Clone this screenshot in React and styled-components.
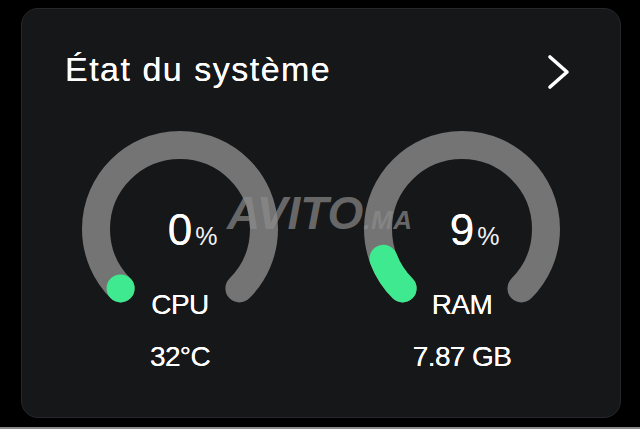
import React from "react";
import styled, { createGlobalStyle } from "styled-components";

const Global = createGlobalStyle`
  html, body { margin: 0; padding: 0; background: #000; }
  body { width: 640px; height: 429px; overflow: hidden; font-family: "Liberation Sans", Arial, sans-serif; }
  #root { width: 640px; height: 429px; }
`;

const Page = styled.div`
  width: 640px;
  height: 429px;
  background: #000;
  padding: 8px 19px 0 21px;
  box-sizing: border-box;
  display: flex;
  flex-direction: column;
`;

const Card = styled.section`
  position: relative;
  box-sizing: border-box;
  width: 600px;
  height: 410px;
  background: #161719;
  border: 1px solid #26272a;
  border-radius: 17px;
  padding: 40px 48px 0 43px;
  color: #fff;
  display: flex;
  flex-direction: column;
`;

const Header = styled.header`
  display: flex;
  align-items: center;
  justify-content: space-between;
  height: 40px;
`;

const Title = styled.h2`
  margin: 0;
  font-weight: 400;
  font-size: 34px;
  line-height: 40px;
  letter-spacing: 1.5px;
  color: #fff;
  text-shadow: 0 0 0.6px #fff;
`;

const Chevron = styled.svg`
  margin-top: 5px;
  display: block;
`;

const Gauges = styled.div`
  display: grid;
  grid-template-columns: 200px 200px;
  column-gap: 82px;
  justify-content: center;
  margin: 40px -48px 0 -43px;
`;

const GaugeCol = styled.div`
  display: flex;
  flex-direction: column;
  align-items: center;
`;

const Dial = styled.div`
  display: grid;
  width: 200px;
  height: 200px;
  & > * { grid-area: 1 / 1; }
`;

const Readout = styled.div`
  align-self: center;
  display: grid;
  grid-template-columns: 1fr auto 1fr;
  align-items: baseline;
  width: 100%;
  margin-top: 1px;
`;

const Num = styled.span`
  grid-column: 2;
  font-size: 44px;
  line-height: 44px;
  color: #fff;
  text-shadow: 0 0 0.6px #fff;
`;

const Pct = styled.span`
  grid-column: 3;
  justify-self: start;
  margin-left: 3px;
  font-size: 25px;
  color: #f2f2f2;
`;

const Label = styled.div`
  margin-top: -38px;
  font-size: 28px;
  line-height: 28px;
  letter-spacing: -0.5px;
  color: #fff;
  text-shadow: 0 0 0.6px #fff;
`;

const Sub = styled.div`
  margin-top: 24px;
  font-size: 28px;
  line-height: 28px;
  letter-spacing: -0.6px;
  color: #fff;
  text-shadow: 0 0 0.6px #fff;
`;

const Watermark = styled.div`
  position: absolute;
  left: 205px;
  top: 181px;
  font-family: "Liberation Sans", Arial, sans-serif;
  font-weight: 700;
  font-style: italic;
  color: rgba(140, 140, 140, 0.7);
  white-space: nowrap;
  pointer-events: none;
  line-height: 1;
`;

const WmBig = styled.span`
  font-size: 46px;
  letter-spacing: 0px;
`;

const WmSmall = styled.span`
  font-size: 26px;
  letter-spacing: 0.5px;
`;

const Rule = styled.div`
  margin-top: 9px;
  height: 2px;
  margin-left: -21px;
  margin-right: -19px;
  background: #8a8a8a;
`;

const R = 84;
const C = 100;
const pt = (deg) => {
  const a = (deg * Math.PI) / 180;
  return [C + R * Math.cos(a), C + R * Math.sin(a)];
};
const [sx, sy] = pt(135);
const [ex, ey] = pt(45);
const ARC = `M ${sx} ${sy} A ${R} ${R} 0 1 1 ${ex} ${ey}`;

function Gauge({ value, label, sub }) {
  const dash = Math.max(value, 0.001);
  return (
    <GaugeCol>
      <Dial>
        <svg width="200" height="200" viewBox="0 0 200 200">
          <path d={ARC} fill="none" stroke="#747474" strokeWidth="28" strokeLinecap="round" />
          <path
            d={ARC}
            fill="none"
            stroke="#3fe98f"
            strokeWidth="28"
            strokeLinecap="round"
            pathLength="100"
            strokeDasharray={`${dash} 1000`}
          />
        </svg>
        <Readout>
          <Num>{value}</Num>
          <Pct>%</Pct>
        </Readout>
      </Dial>
      <Label>{label}</Label>
      <Sub>{sub}</Sub>
    </GaugeCol>
  );
}

export default function App() {
  return (
    <>
      <Global />
      <Page>
        <Card>
          <Header>
            <Title>État du système</Title>
            <Chevron width="26" height="36" viewBox="0 0 26 36">
              <polyline
                points="4,3 21,18 4,33"
                fill="none"
                stroke="#fff"
                strokeWidth="3.6"
                strokeLinecap="round"
                strokeLinejoin="round"
              />
            </Chevron>
          </Header>
          <Gauges>
            <Gauge value={0} label="CPU" sub="32°C" />
            <Gauge value={9} label="RAM" sub="7.87 GB" />
          </Gauges>
          <Watermark>
            <WmBig>AVITO</WmBig>
            <WmSmall>.MA</WmSmall>
          </Watermark>
        </Card>
        <Rule />
      </Page>
    </>
  );
}
